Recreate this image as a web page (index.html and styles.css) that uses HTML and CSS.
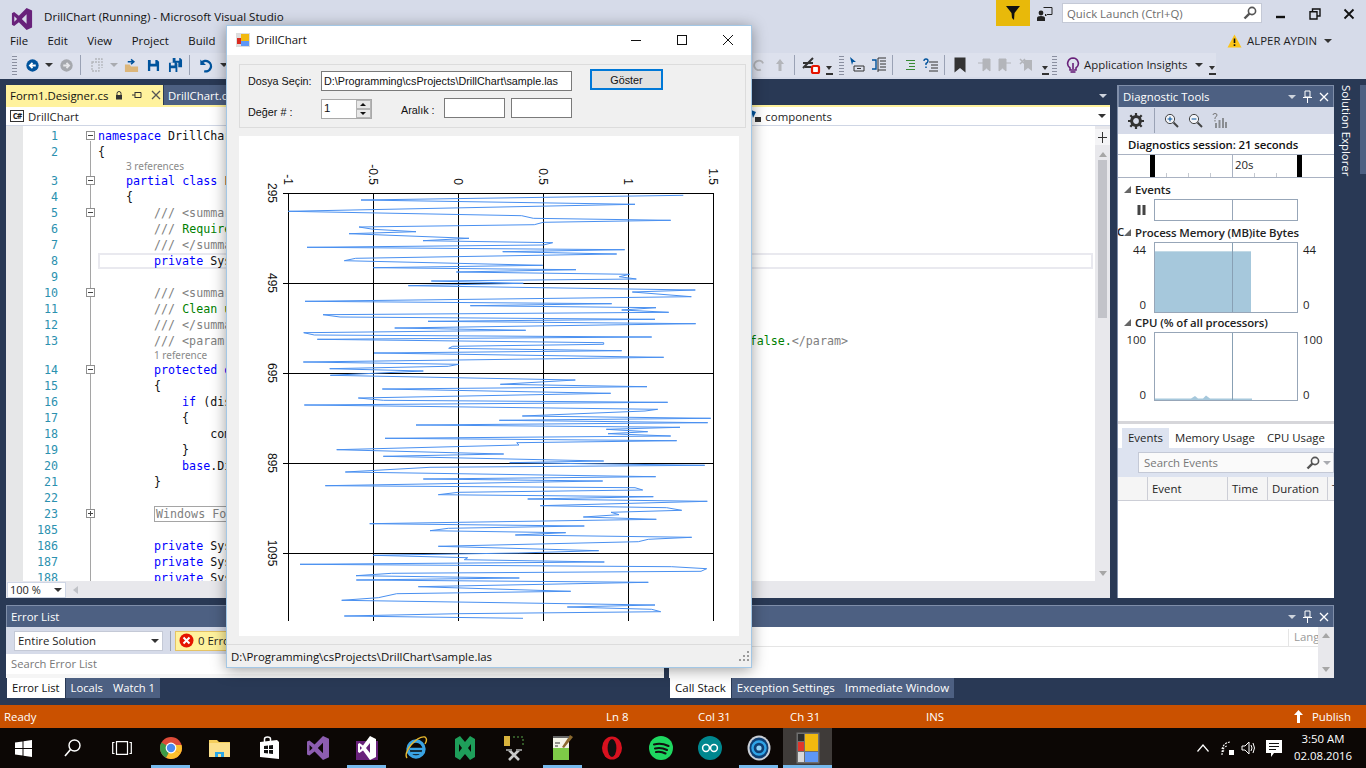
FILE: index.html
```html
<!DOCTYPE html>
<html lang="en">
<head>
    <meta charset="UTF-8">
    <meta name="viewport" content="width=device-width, initial-scale=1.0">
    <title>DrillChart (Running) - Microsoft Visual Studio</title>
    <link rel="stylesheet" href="styles.css">
</head>
<body>
    <!-- Visual Studio chrome -->
    <header class="vs-head">
        <div class="title-row">
            <svg class="vs-logo" viewBox="0 0 24 24"><path fill="#68217a" fill-rule="evenodd" d="M17 0 L23 2.7 V21.3 L17 24 L8.6 15.6 L3.4 19.6 L1 18.4 V5.6 L3.4 4.4 L8.6 8.4Z M3.6 9 V15 L6.6 12Z M17 6.8 L11.8 12 L17 17.2Z"/></svg>
            <span class="app-title">DrillChart (Running) - Microsoft Visual Studio</span>
            <div class="filter-btn"><svg width="16" height="16" viewBox="0 0 16 16"><path d="M1 1 H15 L9.5 8 L9 15 L7 13 L6.5 8Z" fill="#111"/></svg></div>
            <svg class="feedback" width="16" height="16" viewBox="0 0 16 16"><circle cx="4" cy="7" r="2.4" fill="#222"/><path d="M0 15 V12 Q0 10 4 10 Q8 10 8 12 V15Z" fill="#222"/><path d="M6.5 1.5 H15 V8.5 H10 L8.5 10 V8" fill="none" stroke="#222"/></svg>
            <div class="quick-launch">
                <span>Quick Launch (Ctrl+Q)</span>
                <svg width="14" height="14" viewBox="0 0 14 14"><circle cx="9" cy="5" r="3.6" fill="none" stroke="#555" stroke-width="1.6"/><path d="M6.4 7.6 L1.5 12.5" stroke="#555" stroke-width="2.4"/></svg>
            </div>
            <div class="win-btns">
                <svg width="12" height="12" viewBox="0 0 12 12"><path d="M1 9 H10" stroke="#111" stroke-width="2.4"/></svg>
                <svg width="12" height="12" viewBox="0 0 12 12"><path d="M3.5 3 V1 H11 V8 H8.5 M1 3.8 H8 V11 H1Z" fill="none" stroke="#111" stroke-width="1.4"/></svg>
                <svg width="12" height="12" viewBox="0 0 12 12"><path d="M1.5 1.5 L10.5 10.5 M10.5 1.5 L1.5 10.5" stroke="#111" stroke-width="1.8"/></svg>
            </div>
        </div>
        <div class="menu-row">
            <nav class="menu">
                <a>File</a><a>Edit</a><a>View</a><a>Project</a><a>Build</a>
            </nav>
            <div class="user">
                <svg width="15" height="14" viewBox="0 0 15 14"><path d="M7.5 0.5 L14.5 13.5 H0.5Z" fill="#fcc419"/><path d="M7.5 4.5 V9 M7.5 10.2 V12" stroke="#111" stroke-width="1.6"/></svg>
                <span>ALPER AYDIN</span>
                <i class="caret dark"></i>
            </div>
        </div>
        <div class="tool-row">
            <div class="tools">
                <i class="gripper"></i>
                <svg class="ml9" width="13" height="13" viewBox="0 0 16 16"><circle cx="8" cy="8" r="7.6" fill="#00539c"/><path d="M12 8 H5 M8 4.8 L4.8 8 L8 11.2" fill="none" stroke="#fff" stroke-width="2.2"/></svg>
                <i class="caret dark ml6"></i>
                <svg class="ml7" width="13" height="13" viewBox="0 0 16 16"><circle cx="8" cy="8" r="7.6" fill="#a5a8ad"/><path d="M4 8 H11 M8 4.8 L11.2 8 L8 11.2" fill="none" stroke="#e6e7ea" stroke-width="2.2"/></svg>
                <i class="sep ml7"></i>
                <svg class="ml9" width="13" height="14" viewBox="0 0 13 14"><path d="M2 4 H9 V13 H2Z M5 1 H12 V10" fill="none" stroke="#b3b5ba" stroke-width="1.3" stroke-dasharray="2 1"/></svg>
                <i class="caret grey ml7"></i>
                <svg class="ml6" width="15" height="15" viewBox="0 0 16 16"><path d="M1 7 H6 L7.5 9 H15 V15 H1Z" fill="#dcb67a"/><path d="M4 4 H10 M7.5 1.5 L10.5 4 L7.5 6.5" fill="none" stroke="#00539c" stroke-width="1.6"/></svg>
                <svg class="ml8" width="13" height="13" viewBox="0 0 14 14"><path d="M1 1 H11 L13 3 V13 H1Z" fill="#00539c"/><path d="M4 1 H9 V5 H4Z M3.5 8 H10.5 V13 H3.5Z" fill="#dfe3ef"/></svg>
                <svg class="ml8" width="15" height="14" viewBox="0 0 16 15"><path d="M5 0 H13 L15 2 V10 H11 V5 H5Z M1 5 H9 L10 6 V15 H1Z" fill="#00539c"/><path d="M3 5 H7 V8 H3Z M3 11 H8 V15 H3Z M8 0 H12 V3 H8Z" fill="#dfe3ef"/></svg>
                <i class="sep ml6"></i>
                <svg class="ml9" width="14" height="15" viewBox="0 0 16 16"><path d="M3 5 A6 6 0 1 1 6 14.5" fill="none" stroke="#00539c" stroke-width="2.6"/><path d="M1.5 1 V7.5 H8Z" fill="#00539c"/></svg>
                <i class="caret dark ml7"></i>
            </div>
            <div class="tools">
                <svg width="11" height="12" viewBox="0 0 14 14"><path d="M13 5 A6 6 0 1 0 10 13" fill="none" stroke="#b3b5ba" stroke-width="2.4"/></svg>
                <svg class="ml11" width="10" height="14" viewBox="0 0 10 14"><path d="M5 1 L9 6 H6.5 V13 H3.5 V6 H1Z" fill="#b3b5ba"/></svg>
                <i class="sep ml9"></i>
                <svg class="ml6" width="20" height="20" viewBox="0 0 20 20"><path d="M2 8 H12 M4 12 H10 M2 13 L12 3" stroke="#333" stroke-width="2" fill="none"/><rect x="11" y="11" width="7" height="7" rx="1.5" fill="#fff" stroke="#e51400" stroke-width="2.2"/></svg>
                <i class="ov-caret ml5"></i>
                <i class="gripper ml6"></i>
                <svg class="ml5" width="16" height="16" viewBox="0 0 16 16"><path d="M1 0 L7 5 H4 L3 8Z" fill="#00539c"/><path d="M5 9 H15 V14 H5Z M8 11.5 H12" fill="none" stroke="#333"/></svg>
                <svg class="ml6" width="16" height="16" viewBox="0 0 16 16"><path d="M7 1 H15 M9 4 H15 M9 7 H15 M9 10 H15 M7 13 H15 M7 1 V15" stroke="#333" fill="none"/><path d="M1 3 H5 V12 H1" fill="none" stroke="#00539c" stroke-width="1.4"/></svg>
                <i class="sep ml5"></i>
                <svg class="ml10" width="14" height="12" viewBox="0 0 14 12"><path d="M3 1.500 H12 M6 4.500 H12 M6 7.500 H12 M3 10.500 H12" stroke="#388a34" stroke-width="1.2"/></svg>
                <svg class="ml6" width="16" height="14" viewBox="0 0 16 14"><path d="M6 4 H15 M8 7 H15 M8 10 H15 M6 13 H15" stroke="#333"/><path d="M1 3 Q1 1 3 1 Q5 1 5 3 Q5 4.5 3 5.5 V7 M3 8.5 V10" fill="none" stroke="#00539c" stroke-width="1.4"/></svg>
                <i class="sep ml5"></i>
                <svg class="ml9" width="12" height="16" viewBox="0 0 12 16"><path d="M0.5 0.5 H11.5 V15.5 L6 11 L0.5 15.5Z" fill="#333"/></svg>
                <svg class="ml11" width="14" height="14" viewBox="0 0 14 14"><path d="M6 1 H13 V13 L9.5 10 L6 13Z M1 5 H6" fill="#b3b5ba" stroke="#b3b5ba"/></svg>
                <svg class="ml7" width="14" height="14" viewBox="0 0 14 14"><path d="M1 1 H8 V13 L4.5 10 L1 13Z M8 5 H13" fill="#b3b5ba" stroke="#b3b5ba"/></svg>
                <svg class="ml7" width="14" height="14" viewBox="0 0 14 14"><path d="M5 2 H13 V13 L9 10 L5 13Z" fill="#b3b5ba"/><path d="M1 1 L6 6 M6 1 L1 6" stroke="#b3b5ba" stroke-width="1.5"/></svg>
                <i class="ov-caret ml9"></i>
                <i class="gripper ml3"></i>
                <svg class="ml9" width="14" height="17" viewBox="0 0 14 17"><path d="M7 1 A5.5 5.5 0 0 1 10 11 V13 H4 V11 A5.5 5.5 0 0 1 7 1Z M7 6 V12" fill="none" stroke="#68217a" stroke-width="1.6"/><path d="M4.5 15 H9.500" stroke="#68217a" stroke-width="1.6"/></svg>
                <span class="ai-label ml4">Application Insights</span>
                <i class="caret dark ml5"></i>
                <i class="ov-caret ml6"></i>
            </div>
        </div>
    </header>

    <main class="workspace">
        <div class="top-row">
            <section class="doc">
                <div class="doc-tabs">
                    <div class="tab active">
                        <span>Form1.Designer.cs</span>
                        <svg class="ml6" width="8" height="9" viewBox="0 0 8 9"><path d="M2 4 V2.5 A2 2 0 0 1 6 2.5 V4" fill="none" stroke="#333"/><rect x="1" y="4" width="6" height="4.5" fill="#333"/></svg>
                        <svg class="ml9" width="10" height="10" viewBox="0 0 10 10"><path d="M0 5 H3 M3 2 V8 M3 2.500 H9 V7.500 H3" fill="none" stroke="#333"/></svg>
                        <svg class="ml9" width="10" height="10" viewBox="0 0 10 10"><path d="M1 1 L9 9 M9 1 L1 9" stroke="#555" stroke-width="1.3"/></svg>
                    </div>
                    <div class="tab">DrillChart.cs</div>
                    <i class="caret light tabs-caret"></i>
                </div>
                <div class="nav-bar">
                    <div class="nav-project">
                        <span class="cs-badge">C#</span>
                        <span>DrillChart</span>
                    </div>
                    <div class="nav-member">
                        <svg width="14" height="14" viewBox="0 0 14 14"><path d="M2 1 L7 3 L4 9Z" fill="#00539c"/><rect x="6" y="8" width="6" height="5" fill="#333"/></svg>
                        <span>components</span>
                    </div>
                    <i class="caret dark"></i>
                </div>
                <div class="editor">
                    <div class="code">
                        <div class="row"><span class="ln">1</span><span class="fold first"><b></b></span><pre><em>namespace</em> DrillChart</pre></div>
                        <div class="row"><span class="ln">2</span><span class="fold"></span><pre>{</pre></div>
                        <div class="row refs"><span class="ln"></span><span class="fold"></span><pre class="lens indent-1">3 references</pre></div>
                        <div class="row"><span class="ln">3</span><span class="fold"><b></b></span><pre>    <em>partial</em> <em>class</em> Form1</pre></div>
                        <div class="row"><span class="ln">4</span><span class="fold"></span><pre>    {</pre></div>
                        <div class="row"><span class="ln">5</span><span class="fold"><b></b></span><pre>        <s>/// &lt;summary&gt;</s></pre></div>
                        <div class="row"><span class="ln">6</span><span class="fold"></span><pre>        <s>///</s> <u>Required designer variable.</u></pre></div>
                        <div class="row"><span class="ln">7</span><span class="fold"></span><pre>        <s>/// &lt;/summary&gt;</s></pre></div>
                        <div class="row current"><span class="ln">8</span><span class="fold"></span><pre>        <em>private</em> System.ComponentModel.IContainer components = <em>null</em>;</pre></div>
                        <div class="row"><span class="ln">9</span><span class="fold"></span><pre> </pre></div>
                        <div class="row"><span class="ln">10</span><span class="fold"><b></b></span><pre>        <s>/// &lt;summary&gt;</s></pre></div>
                        <div class="row"><span class="ln">11</span><span class="fold"></span><pre>        <s>///</s> <u>Clean up any resources being used.</u></pre></div>
                        <div class="row"><span class="ln">12</span><span class="fold"></span><pre>        <s>/// &lt;/summary&gt;</s></pre></div>
                        <div class="row"><span class="ln">13</span><span class="fold"></span><pre>        <s>/// &lt;param name="disposing"&gt;</s><u>true if managed resources should be disposed; otherwise, false.</u><s>&lt;/param&gt;</s></pre></div>
                        <div class="row refs"><span class="ln"></span><span class="fold"></span><pre class="lens indent-2">1 reference</pre></div>
                        <div class="row"><span class="ln">14</span><span class="fold"><b></b></span><pre>        <em>protected</em> <em>override</em> <em>void</em> Dispose(<em>bool</em> disposing)</pre></div>
                        <div class="row"><span class="ln">15</span><span class="fold"></span><pre>        {</pre></div>
                        <div class="row"><span class="ln">16</span><span class="fold"></span><pre>            <em>if</em> (disposing &amp;&amp; (components != <em>null</em>))</pre></div>
                        <div class="row"><span class="ln">17</span><span class="fold"></span><pre>            {</pre></div>
                        <div class="row"><span class="ln">18</span><span class="fold"></span><pre>                components.Dispose();</pre></div>
                        <div class="row"><span class="ln">19</span><span class="fold"></span><pre>            }</pre></div>
                        <div class="row"><span class="ln">20</span><span class="fold"></span><pre>            <em>base</em>.Dispose(disposing);</pre></div>
                        <div class="row"><span class="ln">21</span><span class="fold"></span><pre>        }</pre></div>
                        <div class="row"><span class="ln">22</span><span class="fold"></span><pre> </pre></div>
                        <div class="row"><span class="ln">23</span><span class="fold"><b class="plus"></b></span><pre>        <span class="collapsed">Windows Form Designer generated code</span></pre></div>
                        <div class="row"><span class="ln">185</span><span class="fold"></span><pre> </pre></div>
                        <div class="row"><span class="ln">186</span><span class="fold"></span><pre>        <em>private</em> System.Windows.Forms.Panel panel1;</pre></div>
                        <div class="row"><span class="ln">187</span><span class="fold"></span><pre>        <em>private</em> System.Windows.Forms.Button button1;</pre></div>
                        <div class="row"><span class="ln">188</span><span class="fold"></span><pre>        <em>private</em> System.Windows.Forms.Label label1;</pre></div>
                    </div>
                    <div class="vscroll">
                        <span class="split-btn"></span>
                        <i class="arrow up"></i>
                        <span class="thumb"></span>
                        <i class="arrow down"></i>
                    </div>
                </div>
                <div class="doc-foot">
                    <div class="zoom-box"><span>100 %</span><i class="caret dark"></i></div>
                    <i class="arrow left"></i>
                </div>
            </section>

            <aside class="diag">
                <div class="panel-title">
                    <span>Diagnostic Tools</span>
                    <div class="title-icons">
                        <i class="caret light"></i>
                        <svg width="9" height="13" viewBox="0 0 9 13"><path d="M2 1 H7 V7 H2Z M0 7.500 H9 M4.500 8 V13" fill="none" stroke="#fff"/></svg>
                        <svg width="10" height="10" viewBox="0 0 10 10"><path d="M1 1 L9 9 M9 1 L1 9" stroke="#fff" stroke-width="1.3"/></svg>
                    </div>
                </div>
                <div class="diag-tools">
                    <svg width="16" height="16" viewBox="0 0 16 16"><circle cx="8" cy="8" r="4.4" fill="none" stroke="#333" stroke-width="3"/><path d="M8 0 V3 M8 13 V16 M0 8 H3 M13 8 H16 M2.3 2.3 L4.4 4.4 M11.6 11.6 L13.7 13.7 M13.7 2.3 L11.6 4.4 M4.4 11.6 L2.3 13.7" stroke="#333" stroke-width="2.2"/></svg>
                    <i class="sep"></i>
                    <svg width="15" height="15" viewBox="0 0 15 15"><circle cx="6" cy="6" r="4.6" fill="#f4f5f9" stroke="#444"/><path d="M9.500 9.500 L14 14" stroke="#444" stroke-width="2"/><path d="M3.6 6 H8.4 M6 3.6 V8.4" stroke="#00539c"/></svg>
                    <svg width="15" height="15" viewBox="0 0 15 15"><circle cx="6" cy="6" r="4.6" fill="#f4f5f9" stroke="#444"/><path d="M9.500 9.500 L14 14" stroke="#444" stroke-width="2"/><path d="M3.6 6 H8.4" stroke="#00539c"/></svg>
                    <svg width="15" height="15" viewBox="0 0 15 15"><path d="M1 2 Q1 0.5 3 0.5 Q5 0.5 5 2 Q5 3.5 3 4.5 V6 M3 7 V8.500" fill="none" stroke="#777"/><path d="M3 10 H5 V15 H3Z M6.500 7 H8.500 V15 H6.500Z M10 5 H12 V15 H10Z M13 9 H15 V15 H13Z" fill="#8a8d92"/></svg>
                </div>
                <div class="session">Diagnostics session: 21 seconds</div>
                <div class="timeline">
                    <i class="bar-a"></i>
                    <span class="stamp">20s</span>
                    <i class="bar-b"></i>
                </div>
                <div class="graphs">
                    <div class="graph-head"><i class="tri"></i><span>Events</span></div>
                    <div class="graph-row events-row">
                        <span class="y-axis"><svg width="9" height="10" viewBox="0 0 9 10"><path d="M0.5 0 H3.500 V10 H0.5Z M5.500 0 H8.500 V10 H5.500Z" fill="#444"/></svg></span>
                        <div class="plot"></div>
                    </div>
                    <div class="graph-head mem-head"><span class="clip-c">C</span><i class="tri"></i><span>Process Memory (MB)</span><span class="clip-rest">ite Bytes</span></div>
                    <div class="graph-row">
                        <span class="y-axis ticks"><span>44</span><span>0</span></span>
                        <div class="plot mem-plot"><div class="mem-fill"></div></div>
                        <span class="y-axis right ticks"><span>44</span><span>0</span></span>
                    </div>
                    <div class="graph-head"><i class="tri"></i><span>CPU (% of all processors)</span></div>
                    <div class="graph-row cpu-row">
                        <span class="y-axis ticks"><span>100</span><span>0</span></span>
                        <div class="plot cpu-plot">
                            <svg width="142" height="67" viewBox="0 0 142 67"><path d="M0 67 V65.5 H36 L40 63 L43 65.5 L48 65.5 L51 62.5 L55 65.5 H97 V67Z" fill="#a6c8dc"/></svg>
                        </div>
                        <span class="y-axis right ticks"><span>100</span><span>0</span></span>
                    </div>
                </div>
                <div class="splitter"></div>
                <div class="diag-tabs">
                    <span class="dtab on">Events</span><span class="dtab">Memory Usage</span><span class="dtab">CPU Usage</span>
                </div>
                <div class="event-search">
                    <div class="event-box">
                        <span>Search Events</span>
                        <svg width="14" height="14" viewBox="0 0 14 14"><circle cx="9" cy="5" r="3.6" fill="none" stroke="#555" stroke-width="1.6"/><path d="M6.4 7.6 L1.5 12.5" stroke="#555" stroke-width="2.4"/></svg>
                        <i class="caret grey"></i>
                    </div>
                </div>
                <div class="event-head">
                    <span class="ec-a"></span><span class="ec-b">Event</span><span class="ec-c">Time</span><span class="ec-d">Duration</span><span class="ec-e">T</span>
                </div>
            </aside>

            <div class="side-rail">
                <span>Solution Explorer</span>
            </div>
        </div>

        <div class="bottom-panels">
            <section class="panel error-panel">
                <div class="panel-title"><span>Error List</span></div>
                <div class="err-tools">
                    <div class="scope"><span>Entire Solution</span><i class="caret dark"></i></div>
                    <i class="sep"></i>
                    <div class="err-count">
                        <svg width="15" height="15" viewBox="0 0 15 15"><circle cx="7.500" cy="7.500" r="7" fill="#e51400"/><path d="M4.500 4.500 L10.500 10.500 M10.500 4.500 L4.500 10.500" stroke="#fff" stroke-width="2"/></svg>
                        <span>0 Errors</span>
                    </div>
                </div>
                <div class="panel-search">Search Error List</div>
                <div class="panel-gap"></div>
                <div class="panel-tabs">
                    <span class="ptab on">Error List</span><span class="ptab">Locals</span><span class="ptab">Watch 1</span>
                </div>
            </section>
            <section class="panel stack-panel">
                <div class="panel-title">
                    <span></span>
                    <div class="title-icons">
                        <i class="caret light"></i>
                        <svg width="9" height="13" viewBox="0 0 9 13"><path d="M2 1 H7 V7 H2Z M0 7.500 H9 M4.500 8 V13" fill="none" stroke="#fff"/></svg>
                        <svg width="10" height="10" viewBox="0 0 10 10"><path d="M1 1 L9 9 M9 1 L1 9" stroke="#fff" stroke-width="1.3"/></svg>
                    </div>
                </div>
                <div class="stack-body">
                    <div class="stack-list">
                        <div class="stack-head"><span>Lang</span></div>
                    </div>
                    <div class="stack-scroll"><i class="arrow up"></i><i class="arrow down"></i></div>
                </div>
                <div class="panel-tabs">
                    <span class="ptab on">Call Stack</span><span class="ptab">Exception Settings</span><span class="ptab">Immediate Window</span>
                </div>
            </section>
        </div>
    </main>

    <footer class="statusbar">
        <span class="st-ready">Ready</span>
        <span class="st-ln">Ln 8</span>
        <span class="st-col">Col 31</span>
        <span class="st-ch">Ch 31</span>
        <span class="st-ins">INS</span>
        <span class="st-pub">
            <svg width="9" height="13" viewBox="0 0 9 13"><path d="M4.500 0 L9 5 H6 V13 H3 V5 H0Z" fill="#fff"/></svg>
            Publish
        </span>
    </footer>

    <div class="taskbar">
        <div class="task-icons">
            <span class="ti"><svg width="17" height="17" viewBox="0 0 17 17"><path d="M0 2.5 L7.5 1.4 V8 H0Z M8.5 1.2 L17 0 V8 H8.5Z M0 9 H7.5 V15.6 L0 14.5Z M8.5 9 H17 V17 L8.5 15.8Z" fill="#fff"/></svg></span>
            <span class="ti"><svg width="17" height="18" viewBox="0 0 17 18"><circle cx="10.5" cy="6.5" r="5.5" fill="none" stroke="#fff" stroke-width="1.4"/><path d="M6.5 10.5 L1 17" stroke="#fff" stroke-width="1.6"/></svg></span>
            <span class="ti"><svg width="20" height="14" viewBox="0 0 20 14"><path d="M4.5 0.7 H15.5 V13.3 H4.5Z M2.5 1.5 H0.7 V12.5 H2.5 M17.5 1.5 H19.3 V12.5 H17.5" fill="none" stroke="#fff" stroke-width="1.2"/></svg></span>
            <span class="ti on"><svg width="22" height="22" viewBox="0 0 22 22"><circle cx="11" cy="11" r="11" fill="#dd4b39"/><path d="M11 11 L20.5 16.5 A11 11 0 0 1 6 20.8Z" fill="#fbc02d"/><path d="M11 11 L6 20.8 A11 11 0 0 1 1.5 5.5Z" fill="#3d9b47"/><path d="M11 11 L20.5 16.5 A11 11 0 0 0 21.5 8 H11Z" fill="#fbc02d"/><circle cx="11" cy="11" r="5.4" fill="#fff"/><circle cx="11" cy="11" r="4.2" fill="#4a8af0"/></svg></span>
            <span class="ti"><svg width="22" height="20" viewBox="0 0 22 20"><path d="M0 2 H8 L10 4 H21 V19 H0Z" fill="#f4ce5c"/><path d="M0 5 H21 V19 H0Z" fill="#fbe08c"/><path d="M6 14 H15 V19 H12 V16 H9 V19 H6Z" fill="#2aa7e8"/></svg></span>
            <span class="ti"><svg width="21" height="24" viewBox="0 0 21 24"><path d="M2 6 L19 4 L21 6 V23 L2 21Z" fill="#fff"/><path d="M6.5 6 V3 Q6.5 1 9.5 1 Q12.5 1 12.5 3 V6" fill="none" stroke="#fff" stroke-width="1.5"/><path d="M6 10 L10 9.6 V13 H6Z M11 9.5 L15 9 V13 H11Z M6 14 H10 V17.5 L6 17Z M11 14 H15 V18 L11 17.6Z" fill="#111"/></svg></span>
            <span class="ti"><svg width="24" height="24" viewBox="0 0 24 24"><path fill="#8c5db0" fill-rule="evenodd" d="M17 0 L23 2.7 V21.3 L17 24 L8.6 15.6 L3.4 19.6 L1 18.4 V5.6 L3.4 4.4 L8.6 8.4Z M3.6 9 V15 L6.6 12Z M17 6.8 L11.8 12 L17 17.2Z"/></svg></span>
            <span class="ti on"><svg width="22" height="24" viewBox="0 0 22 24"><rect x="0" y="5" width="22" height="19" fill="#68217a"/><path d="M14 0 L20 3 V21 L14 24 L7 14.5 L3.5 17 L2 16 V8 L3.5 7 L7 9.5Z M4 10 V14 L6 12Z M14 7 L10 12 L14 17Z" fill="#fff" fill-rule="evenodd"/></svg></span>
            <span class="ti"><svg width="24" height="24" viewBox="0 0 24 24"><circle cx="12" cy="13" r="8" fill="none" stroke="#3aa3e3" stroke-width="3.4"/><path d="M6 13 H20 M7 17 H17" stroke="#3aa3e3" stroke-width="2.6"/><path d="M3 22 Q0 18 7 9 Q15 0 21 1 Q24 3 21 8" fill="none" stroke="#e8b82e" stroke-width="1.4"/></svg></span>
            <span class="ti"><svg width="22" height="24" viewBox="0 0 22 24"><path fill="#1e9e5a" fill-rule="evenodd" d="M16 0 L21 3 V21 L16 24 L11 18 L6 24 L1 21 V3 L6 0 L11 6Z M5 8 V16 L8 12Z M17 8 L14 12 L17 16Z"/></svg></span>
            <span class="ti"><svg width="22" height="26" viewBox="0 0 22 26"><path d="M1 1 H7 V11 H1Z" fill="#d8b23c"/><path d="M10 2 H20 V12" fill="none" stroke="#58a84a" stroke-dasharray="2 2"/><path d="M6 25 L16 15 M16 25 L6 15" stroke="#c9c9c9" stroke-width="2.6"/><path d="M3 15 H9 M13 15 H19" stroke="#8a8a8a" stroke-width="2"/></svg></span>
            <span class="ti on"><svg width="22" height="26" viewBox="0 0 22 26"><path d="M1 2 H17 V25 H1Z" fill="#f4f4e8"/><path d="M1 13 H17 V25 H1Z" fill="#7ecb47"/><path d="M3 8 H8 M3 11 H6" stroke="#333"/><path d="M18 0 L21 2 L12 13 L10 12Z" fill="#8c6a2f"/><rect x="1" y="1" width="16" height="2" fill="#666"/></svg></span>
            <span class="ti"><svg width="22" height="24" viewBox="0 0 22 24"><ellipse cx="11" cy="12" rx="10" ry="11.500" fill="#d8111f"/><ellipse cx="11" cy="12" rx="4.400" ry="9" fill="#111"/></svg></span>
            <span class="ti"><svg width="24" height="24" viewBox="0 0 24 24"><circle cx="12" cy="12" r="12" fill="#1ed760"/><path d="M5 8.5 Q12 6.5 19.5 10 M6 12.5 Q12 11 18 14 M7 16 Q12 15 16.5 17.5" fill="none" stroke="#111" stroke-width="2.1" stroke-linecap="round"/></svg></span>
            <span class="ti"><svg width="24" height="24" viewBox="0 0 24 24"><circle cx="12" cy="12" r="12" fill="#00878f"/><circle cx="8" cy="12" r="3.4" fill="none" stroke="#fff" stroke-width="1.5"/><circle cx="16" cy="12" r="3.4" fill="none" stroke="#fff" stroke-width="1.5"/></svg></span>
            <span class="ti on"><svg width="24" height="26" viewBox="0 0 24 26"><ellipse cx="12" cy="13" rx="11.500" ry="12.500" fill="#c8ced6"/><ellipse cx="12" cy="13" rx="9.500" ry="10.500" fill="#0f3f73"/><circle cx="12" cy="13" r="6.500" fill="none" stroke="#2fa4e7" stroke-width="2.4"/><circle cx="12" cy="13" r="2.600" fill="#8fd3f7"/></svg></span>
            <span class="ti app on"><svg width="24" height="32" viewBox="0 0 24 32"><rect x="0.5" y="0.5" width="23" height="31" fill="#6f6f6f"/><rect x="2" y="2" width="6" height="7" fill="#2d2d2d"/><rect x="2" y="10" width="6" height="9" fill="#e0352b"/><rect x="9" y="2" width="13" height="17" fill="#f2b90f"/><rect x="9" y="20" width="13" height="10" fill="#5e97f6"/><rect x="2" y="20" width="6" height="10" fill="#d8d8d8"/></svg></span>
        </div>
        <div class="tray">
            <svg width="12" height="8" viewBox="0 0 12 8"><path d="M0.5 7.500 L6 1 L11.500 7.500" fill="none" stroke="#fff" stroke-width="1.2"/></svg>
            <svg class="ml12" width="14" height="14" viewBox="0 0 14 14"><path d="M1 8 A9 9 0 0 1 9 1 M1 11 A7 7 0 0 1 6 5 M1 14 A5 5 0 0 1 4 9" fill="none" stroke="#fff" stroke-width="1.1" stroke-dasharray="2 1"/><rect x="8" y="9" width="5" height="5" fill="#fff"/></svg>
            <svg class="ml6" width="15" height="14" viewBox="0 0 15 14"><path d="M1 5 H4 L8 1 V13 L4 9 H1Z" fill="none" stroke="#fff"/><path d="M10 4 Q12 7 10 10 M12 2 Q15 7 12 12" fill="none" stroke="#fff"/></svg>
            <svg class="ml10" width="16" height="17" viewBox="0 0 16 17"><path d="M0 0 H16 V13 H8 L5 17 V13 H0Z" fill="#fff"/><path d="M3 3.500 H13 M3 6.500 H13 M3 9.500 H10" stroke="#111"/></svg>
            <div class="clock"><span>3:50 AM</span><span>02.08.2016</span></div>
        </div>
    </div>

    <!-- The running app, floating above the IDE -->
    <div class="app-window">
        <div class="app-bar">
            <svg class="app-icon" width="14" height="14" viewBox="0 0 14 14"><rect width="14" height="14" fill="#ddd"/><rect x="1" y="5" width="4" height="6" fill="#d92b20"/><rect x="5" y="1" width="8" height="7" fill="#f2b90f"/><rect x="5" y="8" width="8" height="5" fill="#5e97f6"/></svg>
            <span>DrillChart</span>
            <div class="app-btns">
                <svg width="46" height="12" viewBox="0 0 46 12"><path d="M18 6.500 H28" stroke="#111"/></svg>
                <svg width="46" height="12" viewBox="0 0 46 12"><rect x="18.500" y="1.500" width="9" height="9" fill="none" stroke="#111"/></svg>
                <svg width="46" height="12" viewBox="0 0 46 12"><path d="M18 1 L28 11 M28 1 L18 11" stroke="#111"/></svg>
            </div>
        </div>
        <div class="app-body">
            <div class="app-group">
                <div class="form-row">
                    <label class="lbl-file">Dosya Seçin:</label>
                    <div class="field file-field">D:\Programming\csProjects\DrillChart\sample.las</div>
                    <button class="go-btn">Göster</button>
                </div>
                <div class="form-row second">
                    <label class="lbl-val">Değer # :</label>
                    <div class="spinner">
                        <span>1</span>
                        <div class="spin-btns"><i class="up"></i><i class="down"></i></div>
                    </div>
                    <label class="lbl-range">Aralık :</label>
                    <div class="field range"></div>
                    <div class="field range"></div>
                </div>
            </div>
            <div class="chart-panel">
                <svg id="drill-chart" width="500" height="500" viewBox="239 136 500 500">
                    <g class="grid">
                        <path d="M283 193.500 H713 M283 283.500 H713 M283 373.500 H713 M283 463.500 H713 M283 553.500 H713"/>
                        <path d="M288.500 193 V621 M373.500 193 V621 M458.500 193 V621 M543.500 193 V621 M628.500 193 V621 M713.500 193 V621"/>
                    </g>
                    <polyline id="trace" points=""/>
                    <g class="axis-x">
                        <text transform="translate(288,185) rotate(90)">-1</text>
                        <text transform="translate(373,185) rotate(90)">-0.5</text>
                        <text transform="translate(458,185) rotate(90)">0</text>
                        <text transform="translate(543,185) rotate(90)">0.5</text>
                        <text transform="translate(628,185) rotate(90)">1</text>
                        <text transform="translate(713,185) rotate(90)">1.5</text>
                    </g>
                    <g class="axis-y">
                        <text transform="translate(272,193) rotate(90)">295</text>
                        <text transform="translate(272,283) rotate(90)">495</text>
                        <text transform="translate(272,373) rotate(90)">695</text>
                        <text transform="translate(272,463) rotate(90)">895</text>
                        <text transform="translate(272,553) rotate(90)">1095</text>
                    </g>
                </svg>
            </div>
        </div>
        <div class="app-status">
            <span>D:\Programming\csProjects\DrillChart\sample.las</span>
            <svg width="12" height="12" viewBox="0 0 12 12"><path d="M9 1 H11 V3 H9Z M5 5 H7 V7 H5Z M9 5 H11 V7 H9Z M1 9 H3 V11 H1Z M5 9 H7 V11 H5Z M9 9 H11 V11 H9Z" fill="#9a9a9a"/></svg>
        </div>
    </div>

    <script src="chart.js"></script>
</body>
</html>
```

FILE: styles.css
```css
/* Reset and basic styles */
* {
    margin: 0;
    padding: 0;
    box-sizing: border-box;
}

html, body {
    width: 1366px;
    height: 768px;
    overflow: hidden;
}

body {
    position: relative;
    display: flex;
    flex-direction: column;
    background: #293955;
    font-family: "Open Sans", "Noto Sans", sans-serif;
    font-size: 11.4px;
    color: #1e1e1e;
}

i {
    display: block;
    flex: none;
}

svg {
    display: block;
    flex: none;
}

/* Toolbar spacing helpers */
.ml3 { margin-left: 3px; }
.ml4 { margin-left: 4px; }
.ml5 { margin-left: 5px; }
.ml6 { margin-left: 6px; }
.ml7 { margin-left: 7px; }
.ml8 { margin-left: 8px; }
.ml9 { margin-left: 9px; }
.ml10 { margin-left: 10px; }
.ml11 { margin-left: 11px; }
.ml12 { margin-left: 12px; }

/* Small shared bits */
.caret {
    width: 8px;
    height: 4px;
    border-left: 4px solid transparent;
    border-right: 4px solid transparent;
    border-top: 4px solid #333;
}

.caret.light { border-top-color: #ced4dd; }
.caret.grey { border-top-color: #a9abb0; }

.ov-caret {
    width: 7px;
    height: 9px;
    border-bottom: 2px solid #333;
    position: relative;
    align-self: flex-end;
    margin-bottom: 2px;
}

.ov-caret::before {
    content: "";
    position: absolute;
    left: 0;
    top: 0;
    border-left: 3.5px solid transparent;
    border-right: 3.5px solid transparent;
    border-top: 4px solid #333;
}

.gripper {
    width: 5px;
    height: 21px;
    background: radial-gradient(#8a8fa0 40%, transparent 45%) 0 0 / 2px 3px;
}

.sep {
    width: 1px;
    height: 20px;
    background: #9aa2b5;
}

.arrow {
    width: 0;
    height: 0;
    border: 4px solid transparent;
}

.arrow.up { border-bottom: 5px solid #a6a6a6; border-top: 0; }
.arrow.down { border-top: 5px solid #a6a6a6; border-bottom: 0; }
.arrow.left { border-right: 5px solid #c0c2c7; border-left: 0; }

/* Header */
.vs-head {
    height: 79px;
    flex: none;
    background: #d6dbe9;
}

.title-row {
    height: 31px;
    display: flex;
    align-items: flex-start;
    padding-left: 11px;
}

.vs-logo {
    width: 22px;
    height: 24px;
    margin-top: 7px;
}

.app-title {
    margin: 9px 0 0 11px;
    font-size: 11.6px;
    width: 952px;
    color: #111;
}

.filter-btn {
    width: 34px;
    height: 26px;
    background: #e8b90a;
    display: flex;
    align-items: center;
    justify-content: center;
}

.feedback {
    margin: 6px 9px 0 7px;
}

.quick-launch {
    width: 200px;
    height: 20px;
    margin-top: 3px;
    background: #fff;
    border: 1px solid #c4c9d6;
    display: flex;
    align-items: center;
    justify-content: space-between;
    padding: 0 4px;
    color: #6d6d6d;
}

.win-btns {
    display: flex;
    gap: 22px;
    margin: 8px 0 0 13px;
}

.menu-row {
    height: 21px;
    display: flex;
    justify-content: space-between;
    align-items: center;
    padding: 0 34px 2px 10px;
}

.menu {
    display: flex;
}

.menu a {
    margin-right: 19.5px;
    color: #111;
}

.user {
    display: flex;
    align-items: center;
    gap: 5px;
}

.user .caret {
    margin-left: 2px;
}

.tool-row {
    height: 27px;
    display: flex;
    justify-content: space-between;
    padding: 1px 150px 2px 12px;
}

.tools {
    display: flex;
    align-items: center;
    background: #dde1ed;
}

.ai-label {
    width: 106px;
    margin-top: -2px;
    white-space: nowrap;
}

/* Workspace */
.workspace {
    height: 626px;
    flex: none;
    padding-top: 6px;
    background: #293955;
}

.top-row {
    display: flex;
    height: 513px;
    padding-left: 6px;
}

.doc {
    width: 1104px;
    margin-right: 7px;
    flex: none;
    display: flex;
    flex-direction: column;
}

.doc-tabs {
    height: 20px;
    display: flex;
    align-items: stretch;
    position: relative;
    flex: none;
}

.tab {
    display: flex;
    align-items: center;
    padding: 0 4px;
    background: #4d6082;
    color: #fff;
    width: 70px;
    white-space: nowrap;
}

.tab.active {
    width: 157px;
    background: #fff29d;
    color: #111;
    margin-right: 1px;
}

.tabs-caret {
    position: absolute;
    right: 3px;
    top: 9px;
}

.nav-bar {
    height: 21px;
    flex: none;
    display: flex;
    align-items: center;
    background: #fff;
    border-top: 2px solid #fff29d;
    border-bottom: 1px solid #cfd6e5;
    padding: 0 4px;
}

.nav-project {
    display: flex;
    align-items: center;
    gap: 4px;
    width: 740px;
}

.cs-badge {
    width: 14px;
    height: 12px;
    border: 1px solid #333;
    font-size: 8px;
    line-height: 10px;
    text-align: center;
    font-weight: 700;
    letter-spacing: -1px;
}

.nav-member {
    display: flex;
    align-items: center;
    gap: 2px;
    width: 349px;
}

.editor {
    flex: 1;
    min-height: 0;
    display: flex;
    background: #fff;
    overflow: hidden;
}

.code {
    flex: 1;
    padding-top: 2px;
    background: linear-gradient(90deg, #e6e7e8 17px, #fff 17px);
    overflow: hidden;
    font-family: "DejaVu Sans Mono", monospace;
    font-size: 11.65px;
}

.row {
    height: 16px;
    line-height: 16px;
    display: flex;
    white-space: pre;
}

.row.refs {
    height: 13px;
    line-height: 13px;
}

.row pre {
    font: inherit;
    margin-left: 2px;
    flex: 1;
    color: #111;
}

.row pre em { font-style: normal; color: #0000ff; }
.row pre s { text-decoration: none; color: #808080; }
.row pre u { text-decoration: none; color: #008000; }

.row pre.lens {
    font-family: "Noto Sans", sans-serif;
    font-size: 10px;
    color: #8a8a8a;
}

.row pre.indent-1 { padding-left: 28px; }
.row pre.indent-2 { padding-left: 56px; }

.row.current pre {
    box-shadow: inset 0 0 0 2px #e9e9ef;
    margin-right: 2px;
}

.collapsed {
    border: 1px solid #a5a5a5;
    color: #808080;
    padding: 0 1px;
}

.ln {
    width: 35px;
    margin: 0 28px 0 17px;
    text-align: right;
    color: #2b91af;
    flex: none;
}

.fold {
    width: 10px;
    flex: none;
    position: relative;
    background: linear-gradient(#a5a5a5, #a5a5a5) 4px 0 / 1px 100% no-repeat;
}

.fold.first {
    background-position: 4px 13px;
}

.fold b {
    position: absolute;
    left: 0;
    top: 3px;
    width: 9px;
    height: 9px;
    border: 1px solid #8f8f8f;
    background: linear-gradient(#444, #444) center / 5px 1px no-repeat, #fff;
}

.fold b.plus {
    background: linear-gradient(#444, #444) center / 5px 1px no-repeat, linear-gradient(#444, #444) center / 1px 5px no-repeat, #fff;
}

.vscroll {
    width: 15px;
    flex: none;
    background: #e8e8ec;
    display: flex;
    flex-direction: column;
    align-items: center;
    position: relative;
}

.split-btn {
    width: 15px;
    height: 16px;
    margin-top: 3px;
    background: linear-gradient(#333, #333) center / 9px 1px no-repeat, linear-gradient(#333, #333) center / 1px 11px no-repeat, #f4f4f6;
}

.vscroll .arrow.up {
    margin-top: 7px;
}

.thumb {
    width: 9px;
    height: 158px;
    margin-top: 3px;
    background: #c2c3c9;
}

.vscroll .arrow.down {
    margin-top: auto;
    margin-bottom: 5px;
}

.doc-foot {
    height: 17px;
    flex: none;
    display: flex;
    align-items: center;
    gap: 7px;
    background: #e8e8ec;
    padding-left: 1px;
}

.zoom-box {
    width: 59px;
    height: 16px;
    background: #fff;
    border: 1px solid #cfd6e5;
    display: flex;
    align-items: center;
    justify-content: space-between;
    padding: 0 3px 0 2px;
    font-size: 11px;
}

.bottom-panels {
    display: flex;
    margin: 7px 0 0 6px;
    gap: 5px;
}

.panel {
    height: 93px;
    display: flex;
    flex-direction: column;
    flex: none;
}

.error-panel {
    width: 658px;
}

.stack-panel {
    width: 665px;
}

.panel-title {
    height: 22px;
    flex: none;
    display: flex;
    align-items: center;
    justify-content: space-between;
    background: #4d6082;
    border: 1px solid #7f8ea9;
    border-bottom: 0;
    color: #fff;
    padding: 0 4px;
}

.title-icons {
    display: flex;
    align-items: center;
    gap: 7px;
}

.err-tools {
    height: 27px;
    flex: none;
    display: flex;
    align-items: center;
    background: #d6dbe9;
    padding-left: 8px;
}

.err-tools .sep {
    margin: 0 4px 0 7px;
}

.scope {
    width: 149px;
    height: 20px;
    background: #fff;
    border: 1px solid #c4c9d6;
    display: flex;
    align-items: center;
    justify-content: space-between;
    padding: 0 3px;
}

.err-count {
    display: flex;
    align-items: center;
    gap: 4px;
    height: 20px;
    padding: 0 3px;
    width: 120px;
    background: #fff29d;
    border: 1px solid #e5c365;
    white-space: nowrap;
}

.panel-search {
    height: 20px;
    flex: none;
    background: #fff;
    color: #777;
    padding: 0 5px;
    line-height: 20px;
    font-size: 11.2px;
}

.panel-gap {
    height: 4px;
    flex: none;
    background: #f5f5f5;
}

.panel-tabs {
    height: 20px;
    flex: none;
    display: flex;
    padding-left: 1px;
}

.ptab {
    background: #4d6082;
    color: #fff;
    padding: 0 5px;
    line-height: 20px;
    font-size: 11.2px;
    white-space: nowrap;
}

.ptab.on {
    background: #fff;
    color: #111;
    margin-right: 1px;
}

.stack-panel .ptab {
    font-size: 11.5px;
}

.stack-body {
    height: 51px;
    flex: none;
    display: flex;
    background: #fff;
}

.stack-list {
    flex: 1;
}

.stack-head {
    height: 20px;
    border-bottom: 1px solid #e5e5e5;
    display: flex;
    justify-content: flex-end;
    padding: 2px 0 0;
    color: #999;
    overflow: hidden;
}

.stack-head span {
    border-left: 1px solid #e5e5e5;
    padding-left: 5px;
    width: 30px;
    overflow: hidden;
}

.stack-scroll {
    width: 16px;
    background: #e8e8ec;
    display: flex;
    flex-direction: column;
    justify-content: space-between;
    align-items: center;
    padding: 6px 0;
}

/* Diagnostic Tools */
.diag {
    width: 217px;
    flex: none;
    background: #fff;
    display: flex;
    flex-direction: column;
    overflow: hidden;
    border-left: 1px solid #7f8ea9;
}

.diag-tools {
    height: 27px;
    flex: none;
    background: #d6dbe9;
    display: flex;
    align-items: center;
    padding-left: 10px;
    gap: 9px;
}

.diag-tools .sep {
    height: 25px;
    margin-left: 1px;
}

.session {
    height: 21px;
    flex: none;
    line-height: 21px;
    padding-left: 10px;
    font-weight: 600;
    letter-spacing: -0.1px;
    color: #111;
    white-space: nowrap;
    border-bottom: 1px solid #a9b2c2;
}

.timeline {
    height: 23px;
    flex: none;
    position: relative;
    border-bottom: 1px solid #a9b2c2;
    background:
        linear-gradient(#a9b2c2, #a9b2c2) 114px 0 / 1px 100% no-repeat,
        repeating-linear-gradient(90deg, #c5c9d0 0 1px, transparent 1px 22px) 48px 18px / 120px 5px no-repeat;
}

.bar-a, .bar-b {
    position: absolute;
    top: 0;
    bottom: 0;
    width: 5px;
    background: #000;
}

.bar-a { left: 32px; }
.bar-b { left: 179px; }

.stamp {
    position: absolute;
    left: 117px;
    top: 2px;
    line-height: 16px;
}

.graphs {
    height: 243px;
    flex: none;
    padding-top: 2px;
}

.graph-head {
    height: 19px;
    display: flex;
    align-items: center;
    gap: 4px;
    padding-left: 6px;
    font-weight: 600;
    letter-spacing: -0.1px;
    color: #222;
    white-space: nowrap;
    position: relative;
}

.tri {
    width: 0;
    height: 0;
    border-left: 7px solid transparent;
    border-bottom: 7px solid #666;
}

.mem-head {
    margin-top: 2px;
}

.mem-head .clip-rest {
    margin-left: -4px;
}

.clip-c {
    position: absolute;
    left: -1px;
    top: 1px;
}

.graph-row {
    display: flex;
    height: 71px;
}

.events-row {
    height: 22px;
}

.cpu-row {
    height: 69px;
}

.y-axis {
    width: 36px;
    flex: none;
    padding-right: 8px;
    display: flex;
    align-items: center;
    justify-content: flex-end;
}

.y-axis.ticks {
    flex-direction: column;
    align-items: flex-end;
    justify-content: space-between;
    padding: 0 8px 0 0;
    line-height: 16px;
}

.y-axis.right {
    align-items: flex-start;
    padding: 0 0 0 5px;
}

.plot {
    width: 144px;
    flex: none;
    border: 1px solid #97a6b8;
    background: linear-gradient(#97a6b8, #97a6b8) 77px 0 / 1px 100% no-repeat, #fff;
    position: relative;
}

.mem-fill {
    position: absolute;
    left: 0;
    bottom: 0;
    width: 96px;
    height: 61px;
    background: #a6c8dc;
    border-top: 1px solid #c3dae6;
}

.mem-plot::after,
.cpu-plot::after {
    content: "";
    position: absolute;
    left: 77px;
    top: 0;
    bottom: 0;
    width: 1px;
    background: #88a0b4;
}

.cpu-row .y-axis span:last-child {
    margin-bottom: -2px;
}

.splitter {
    height: 3px;
    flex: none;
    background: #d6d6da;
}

.diag-tabs {
    height: 24px;
    flex: none;
    display: flex;
    padding: 4px 0 0 4px;
}

.dtab {
    padding: 0 6px;
    line-height: 20px;
    white-space: nowrap;
}

.dtab.on {
    background: #dde3f0;
}

.event-search {
    height: 29px;
    flex: none;
    background: #dde3f0;
    padding: 4px 0 0 20px;
}

.event-box {
    height: 21px;
    background: #fafafa;
    border: 1px solid #c4c9d6;
    display: flex;
    align-items: center;
    padding: 0 2px 0 5px;
    color: #777;
    gap: 3px;
}

.event-box span {
    flex: 1;
}

.event-head {
    height: 24px;
    flex: none;
    display: flex;
    background: #f5f5f5;
    border-bottom: 1px solid #ccced6;
    padding-left: 2px;
    line-height: 23px;
    white-space: nowrap;
}

.event-head span {
    border-right: 1px solid #ccced6;
    padding-left: 4px;
    flex: none;
    overflow: hidden;
}

.ec-a { width: 28px; }
.ec-b { width: 80px; }
.ec-c { width: 40px; }
.ec-d { width: 60px; }
.ec-e { width: 10px; border-right: 0 !important; }

/* Rail on the far right */
.side-rail {
    flex: 1;
    position: relative;
    padding: 0 0 0 5px;
}

.side-rail::after {
    content: "";
    position: absolute;
    right: 0;
    top: 0;
    width: 6px;
    height: 89px;
    background: #4d6082;
}

.side-rail span {
    display: block;
    writing-mode: vertical-rl;
    color: #fff;
    white-space: nowrap;
}

/* Status bar */
.statusbar {
    height: 23px;
    flex: none;
    background: #ca5100;
    color: #fff;
    display: flex;
    align-items: center;
    padding-left: 4px;
}

.st-ready { width: 602px; }
.st-ln { width: 92px; }
.st-col { width: 92px; }
.st-ch { width: 136px; }
.st-ins { width: 368px; }

.st-pub {
    display: flex;
    align-items: center;
    gap: 9px;
}

/* Taskbar */
.taskbar {
    height: 40px;
    flex: none;
    background: #0c0705;
    display: flex;
    justify-content: space-between;
}

.task-icons {
    display: flex;
    margin-left: -1px;
}

.ti {
    width: 49px;
    height: 40px;
    display: flex;
    align-items: center;
    justify-content: center;
    position: relative;
}

.ti.on::after {
    content: "";
    position: absolute;
    left: 5px;
    right: 5px;
    bottom: 0;
    height: 3px;
    background: #76b9ed;
}

.ti.app {
    background: #3f3b39;
}

.ti.app::after {
    left: 0;
    right: 0;
}

.tray {
    display: flex;
    align-items: center;
    padding-right: 16px;
}

.clock {
    width: 54px;
    margin: -3px 0 0 14px;
    display: flex;
    flex-direction: column;
    align-items: center;
    color: #fff;
    font-size: 11.4px;
    line-height: 17px;
    white-space: nowrap;
}

/* DrillChart window - floats over the IDE */
.app-window {
    position: absolute;
    left: 226px;
    top: 25px;
    width: 526px;
    height: 643px;
    background: #f0f0f0;
    border: 1px solid #a3c7e5;
    box-shadow: 0 2px 14px rgba(0, 0, 0, 0.38);
    display: flex;
    flex-direction: column;
    font-family: "Liberation Sans", Arial, sans-serif;
    font-size: 10.8px;
    color: #111;
}

.app-bar {
    height: 29px;
    flex: none;
    background: #fff;
    display: flex;
    align-items: center;
    padding: 0 0 2px 9px;
    font-family: "Open Sans", sans-serif;
    font-size: 11.4px;
}

.app-icon {
    margin-right: 6px;
}

.app-bar > span {
    flex: 1;
}

.app-btns {
    display: flex;
    align-items: center;
    padding-right: 0;
}

.app-body {
    flex: 1;
    padding: 9px 5px 0 12px;
    min-height: 0;
}

.app-group {
    height: 64px;
    border: 1px solid #dcdcdc;
    padding: 6px 0 0 8px;
}

.form-row {
    display: flex;
    align-items: flex-start;
    height: 20px;
}

.form-row.second {
    margin-top: 7px;
}

label {
    line-height: 20px;
}

.lbl-file { width: 73px; }

.lbl-val {
    width: 73px;
    margin-top: 4px;
}

.field {
    background: #fff;
    border: 1px solid #7a7a7a;
    height: 20px;
    line-height: 18px;
    padding-left: 2px;
    white-space: nowrap;
    overflow: hidden;
}

.file-field {
    width: 251px;
}

.go-btn {
    width: 73px;
    height: 21px;
    margin: -2px 0 0 18px;
    background: #e1e1e1;
    border: 2px solid #0078d7;
    font: inherit;
    color: #111;
}

.spinner {
    width: 51px;
    height: 20px;
    margin-top: 1px;
    background: #fff;
    border: 1px solid #a9a9a9;
    display: flex;
    justify-content: space-between;
    padding-left: 2px;
    line-height: 16px;
    font-size: 11.5px;
}

.spin-btns {
    width: 15px;
    display: flex;
    flex-direction: column;
}

.spin-btns i {
    flex: 1;
    background: #e8e8e8;
    border: 1px solid #b5b5b5;
    position: relative;
}

.spin-btns i::after {
    content: "";
    position: absolute;
    left: 3px;
    top: 2px;
    border-left: 3px solid transparent;
    border-right: 3px solid transparent;
}

.spin-btns .up::after { border-bottom: 3px solid #111; }
.spin-btns .down::after { border-top: 3px solid #111; }

.lbl-range {
    width: 43px;
    margin: 2px 0 0 29px;
}

.field.range {
    width: 61px;
    margin-right: 6px;
}

.chart-panel {
    width: 500px;
    height: 500px;
    margin-top: 8px;
    background: #fff;
}

#drill-chart text {
    font-size: 12px;
    fill: #111;
    dominant-baseline: central;
}

.axis-x text { text-anchor: end; }
.axis-y text { text-anchor: middle; }

.grid path {
    fill: none;
    stroke: #000;
    stroke-width: 1;
}

#trace {
    fill: none;
    stroke: #4a90f0;
    stroke-width: 1;
}

.app-status {
    height: 23px;
    flex: none;
    border-top: 1px solid #dcdcdc;
    display: flex;
    align-items: center;
    justify-content: space-between;
    padding: 0 1px 0 4px;
    font-family: "Open Sans", sans-serif;
    font-size: 11.4px;
}
```

FILE: chart.js
```js
const upperHalf = [
    [1195,16],[228,30],[1050,43],[10,64],[710,77],[745,85],[1157,91],[775,97],[748,104],[222,111],
    [265,118],[393,125],[192,131],[552,145],[414,152],[803,158],[775,165],[66,172],[1019,179],[653,185],
    [995,192],[212,205],[178,212],[773,226],[265,233],[873,239],[514,246],[1034,253],[1003,260],[1054,267],
    [439,273],[715,280],[370,287],[1231,300],[1042,306],[1219,320],[60,334],[980,341],[556,347],[1113,353],
    [1010,360],[1151,367],[114,374],[165,381],[1110,388],[429,394],[1232,401],[329,414],[722,421],[56,428],
    [88,435],[1100,441],[97,448],[956,458],[956,463],[503,469],[491,475],[1010,482],[267,489],[1136,502],
    [55,516],[521,523],[490,529],[134,536],[415,543],[136,556],[871,570],[646,583],[1086,590],[292,597],
    [977,610],[220,624],[295,631],[1148,637]
];

const lowerHalf = [
    [58,0],[1118,13],[1080,18],[712,33],[1277,40],[643,46],[1268,53],[393,60],[1185,67],[964,73],
    [1088,80],[969,86],[1157,93],[300,100],[1175,107],[695,113],[702,120],[155,134],[656,147],[295,154],
    [956,168],[674,173],[1259,181],[435,187],[181,201],[1112,215],[415,222],[953,228],[121,242],[1050,248],
    [1073,255],[520,262],[460,269],[1105,275],[728,282],[1267,289],[766,302],[1145,308],[1190,316],[978,322],
    [1002,329],[895,336],[1114,343],[254,356],[898,363],[490,370],[435,377],[842,383],[691,390],[1220,397],
    [1090,403],[1060,410],[460,424],[941,437],[700,444],[265,451],[548,458],[538,464],[958,471],[45,478],
    [1160,485],[1265,491],[1248,499],[320,505],[213,512],[703,519],[214,525],[1090,532],[400,545],[857,559],
    [335,566],[280,578],[170,586],[1110,600],[847,606],[1100,613],[1127,620],[520,626],[178,633],[714,640]
];

function toPoints(half, top) {
    return half.map(function (p) {
        return (285 + p[0] / 3).toFixed(1) + ',' + (top + p[1] / 3).toFixed(1);
    });
}

const points = toPoints(upperHalf, 190).concat(toPoints(lowerHalf, 405));
document.getElementById('trace').setAttribute('points', points.join(' '));
```
